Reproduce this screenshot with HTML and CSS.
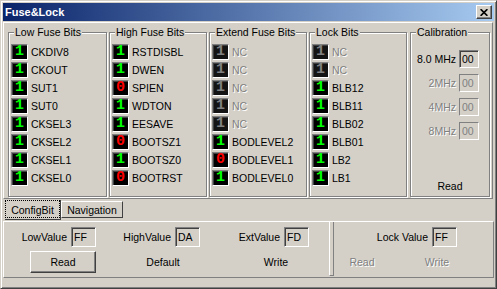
FILE: index.html
```html
<!DOCTYPE html>
<html lang="en">
<head>
    <meta charset="UTF-8">
    <title>Fuse&amp;Lock</title>
    <link rel="stylesheet" href="styles.css">
</head>
<body>
    <div class="window">
        <div class="titlebar">
            <span class="title">Fuse&amp;Lock</span>
            <span class="close">
                <svg width="8" height="7" viewBox="0 0 8 7"><path d="M0.6 0.2 L7.4 6.8 M7.4 0.2 L0.6 6.8" stroke="#000" stroke-width="1.7"/></svg>
            </span>
        </div>

        <div class="fuses">
            <div class="group low">
                <span class="caption">Low Fuse Bits</span>
                <div class="rows">
                    <div class="row"><span class="bit on">1</span><span class="name">CKDIV8</span></div>
                    <div class="row"><span class="bit on">1</span><span class="name">CKOUT</span></div>
                    <div class="row"><span class="bit on">1</span><span class="name">SUT1</span></div>
                    <div class="row"><span class="bit on">1</span><span class="name">SUT0</span></div>
                    <div class="row"><span class="bit on">1</span><span class="name">CKSEL3</span></div>
                    <div class="row"><span class="bit on">1</span><span class="name">CKSEL2</span></div>
                    <div class="row"><span class="bit on">1</span><span class="name">CKSEL1</span></div>
                    <div class="row"><span class="bit on">1</span><span class="name">CKSEL0</span></div>
                </div>
            </div>
            <div class="group">
                <span class="caption">High Fuse Bits</span>
                <div class="rows">
                    <div class="row"><span class="bit on">1</span><span class="name">RSTDISBL</span></div>
                    <div class="row"><span class="bit on">1</span><span class="name">DWEN</span></div>
                    <div class="row"><span class="bit off">0</span><span class="name">SPIEN</span></div>
                    <div class="row"><span class="bit on">1</span><span class="name">WDTON</span></div>
                    <div class="row"><span class="bit on">1</span><span class="name">EESAVE</span></div>
                    <div class="row"><span class="bit off">0</span><span class="name">BOOTSZ1</span></div>
                    <div class="row"><span class="bit on">1</span><span class="name">BOOTSZ0</span></div>
                    <div class="row"><span class="bit off">0</span><span class="name">BOOTRST</span></div>
                </div>
            </div>
            <div class="group">
                <span class="caption">Extend Fuse Bits</span>
                <div class="rows">
                    <div class="row"><span class="bit nc">1</span><span class="name disabled">NC</span></div>
                    <div class="row"><span class="bit nc">1</span><span class="name disabled">NC</span></div>
                    <div class="row"><span class="bit nc">1</span><span class="name disabled">NC</span></div>
                    <div class="row"><span class="bit nc">1</span><span class="name disabled">NC</span></div>
                    <div class="row"><span class="bit nc">1</span><span class="name disabled">NC</span></div>
                    <div class="row"><span class="bit on">1</span><span class="name">BODLEVEL2</span></div>
                    <div class="row"><span class="bit off">0</span><span class="name">BODLEVEL1</span></div>
                    <div class="row"><span class="bit on">1</span><span class="name">BODLEVEL0</span></div>
                </div>
            </div>
            <div class="group">
                <span class="caption">Lock Bits</span>
                <div class="rows">
                    <div class="row"><span class="bit nc">1</span><span class="name disabled">NC</span></div>
                    <div class="row"><span class="bit nc">1</span><span class="name disabled">NC</span></div>
                    <div class="row"><span class="bit on">1</span><span class="name">BLB12</span></div>
                    <div class="row"><span class="bit on">1</span><span class="name">BLB11</span></div>
                    <div class="row"><span class="bit on">1</span><span class="name">BLB02</span></div>
                    <div class="row"><span class="bit on">1</span><span class="name">BLB01</span></div>
                    <div class="row"><span class="bit on">1</span><span class="name">LB2</span></div>
                    <div class="row"><span class="bit on">1</span><span class="name">LB1</span></div>
                </div>
            </div>
            <div class="group calib">
                <span class="caption">Calibration</span>
                <div class="freqs">
                    <div class="freq"><span>8.0 MHz</span><span class="edit small">00</span></div>
                    <div class="freq disabled"><span>2MHz</span><span class="edit small">00</span></div>
                    <div class="freq disabled"><span>4MHz</span><span class="edit small">00</span></div>
                    <div class="freq disabled"><span>8MHz</span><span class="edit small">00</span></div>
                </div>
                <div class="flat cal-read">Read</div>
            </div>
        </div>

        <div class="tabs">
            <span class="tab active"><span class="focus">ConfigBit</span></span>
            <span class="tab">Navigation</span>
        </div>

        <div class="pane">
            <div class="values">
                <div class="field">LowValue <span class="edit">FF</span></div>
                <div class="field">HighValue <span class="edit">DA</span></div>
                <div class="field">ExtValue <span class="edit">FD</span></div>
                <div class="btn">Read</div>
                <div class="flat default">Default</div>
                <div class="flat">Write</div>
            </div>
            <div class="splitter"></div>
            <div class="lock">
                <div class="field lock-field">Lock Value <span class="edit">FF</span></div>
                <div class="lock-btns">
                    <div class="flat disabled">Read</div>
                    <div class="flat disabled">Write</div>
                </div>
            </div>
        </div>
    </div>
</body>
</html>
```

FILE: styles.css
```css
* {
    margin: 0;
    padding: 0;
    box-sizing: border-box;
}
body {
    font-family: "Liberation Sans", Arial, sans-serif;
    font-size: 10.5px;
    color: #000;
    background: #d4d0c8;
}
.window {
    width: 497px;
    height: 289px;
    padding: 2px;
    background: #d4d0c8;
    border: 1px solid;
    border-color: #d4d0c8 #404040 #404040 #d4d0c8;
    box-shadow: inset 1px 1px 0 #fff, inset -1px -1px 0 #808080;
}

/* title bar */
.titlebar {
    height: 18px;
    display: flex;
    align-items: center;
    justify-content: space-between;
    padding-left: 2px;
    background: linear-gradient(to right, #0a246a, #a6caf0);
}
.title {
    color: #fff;
    font-weight: bold;
    font-size: 11px;
}
.close {
    width: 16px;
    height: 14px;
    margin-right: 2px;
    display: flex;
    justify-content: center;
    align-items: center;
    background: #d4d0c8;
    border: 1px solid;
    border-color: #fff #404040 #404040 #fff;
    box-shadow: inset -1px -1px 0 #808080;
}

/* fuse groups */
.fuses {
    width: 490px;
    height: 177px;
    margin-top: 1px;
    display: flex;
    align-items: flex-start;
    gap: 2px;
    padding-left: 4px;
    border: 1px solid;
    border-color: #fff #808080 #808080 #fff;
}
.group {
    width: 98px;
    height: 165px;
    margin-top: 9px;
    display: flex;
    flex-direction: column;
    border: 1px solid #808080;
    box-shadow: inset 1px 1px 0 #fff, 1px 1px 0 #fff;
}
.group.low {
    width: 99px;
}
.group.calib {
    width: 80px;
    margin-left: 1px;
    padding-bottom: 1px;
}
.caption {
    align-self: flex-start;
    margin: -7px 0 0 5px;
    padding: 0 1px;
    height: 12px;
    line-height: 12px;
    background: #d4d0c8;
}
.rows {
    margin-top: 6px;
    display: flex;
    flex-direction: column;
    gap: 2px;
}
.row {
    height: 16px;
    display: flex;
    align-items: center;
}
.bit {
    width: 17px;
    height: 16px;
    margin-left: 2px;
    display: flex;
    justify-content: center;
    align-items: center;
    background: #000;
    border: 1px solid;
    border-color: #808080 #fff #fff #808080;
    box-shadow: inset 1px 1px 0 #404040;
    font-family: "Liberation Mono", monospace;
    font-weight: bold;
    font-size: 15px;
    line-height: 14px;
}
.bit.on { color: #00ff00; }
.bit.off { color: #ff0000; }
.bit.nc {
    color: #808080;
    background: #141414;
}
.name {
    margin-left: 3px;
}
.disabled {
    color: #808080;
    text-shadow: 1px 1px 0 #fff;
}

/* calibration */
.freqs {
    margin-top: 12px;
    display: flex;
    flex-direction: column;
    gap: 6px;
}
.freq {
    display: flex;
    justify-content: flex-end;
    align-items: center;
    gap: 3px;
    padding-right: 10px;
}
.edit {
    width: 25px;
    height: 20px;
    padding-left: 2px;
    line-height: 18px;
    text-align: left;
    border: 1px solid;
    border-color: #808080 #fff #fff #808080;
    box-shadow: inset 1px 1px 0 #404040;
    color: #000;
    text-shadow: none;
}
.edit.small {
    width: 20px;
    height: 18px;
    line-height: 16px;
}
.freq.disabled .edit {
    color: #808080;
    box-shadow: none;
}
.flat {
    height: 18px;
    display: flex;
    justify-content: center;
    align-items: center;
}
.cal-read {
    margin-top: auto;
}

/* tabs */
.tabs {
    height: 22px;
    display: flex;
    align-items: flex-start;
    padding: 1px 0 0 2px;
}
.tab {
    width: 62px;
    height: 17px;
    margin-top: 1px;
    display: flex;
    justify-content: center;
    align-items: center;
    border: 1px solid;
    border-color: #fff #404040 #404040 #fff;
}
.tab.active {
    width: 56px;
    height: 20px;
    margin-top: 0;
    align-items: flex-start;
    border-color: transparent #404040 #404040 transparent;
    border-width: 0 1px 1px 0;
}
.focus {
    width: 55px;
    height: 18px;
    display: flex;
    justify-content: center;
    align-items: flex-end;
    padding-bottom: 1px;
    border: 1px dotted #000;
}

/* bottom pane */
.pane {
    height: 57px;
    display: flex;
    border: 1px solid;
    border-color: #fff #808080 #808080 #fff;
}
.values {
    width: 325px;
    padding-top: 5px;
    display: grid;
    grid-template-columns: 92px 104px 109px;
    grid-template-rows: 20px 22px;
    row-gap: 4px;
}
.field {
    display: flex;
    justify-content: flex-end;
    align-items: center;
    gap: 4px;
}
.btn {
    width: 66px;
    height: 22px;
    justify-self: end;
    display: flex;
    justify-content: center;
    align-items: center;
    border: 1px solid;
    border-color: #fff #404040 #404040 #fff;
    box-shadow: inset -1px -1px 0 #808080;
}
.values .flat {
    width: 66px;
    height: 22px;
    justify-self: end;
}
.values .default {
    margin-right: 4px;
}
.splitter {
    width: 5px;
    margin-bottom: 1px;
    border-left: 1px solid #fff;
    border-right: 1px solid #808080;
    border-bottom: 1px solid #808080;
}
.lock {
    flex: 1;
    padding-top: 5px;
    display: flex;
    flex-direction: column;
    gap: 4px;
}
.lock-field {
    height: 20px;
    padding-right: 36px;
}
.lock-btns {
    display: flex;
    gap: 25px;
    padding-left: 3px;
}
.lock-btns .flat {
    width: 50px;
    height: 22px;
}
```
